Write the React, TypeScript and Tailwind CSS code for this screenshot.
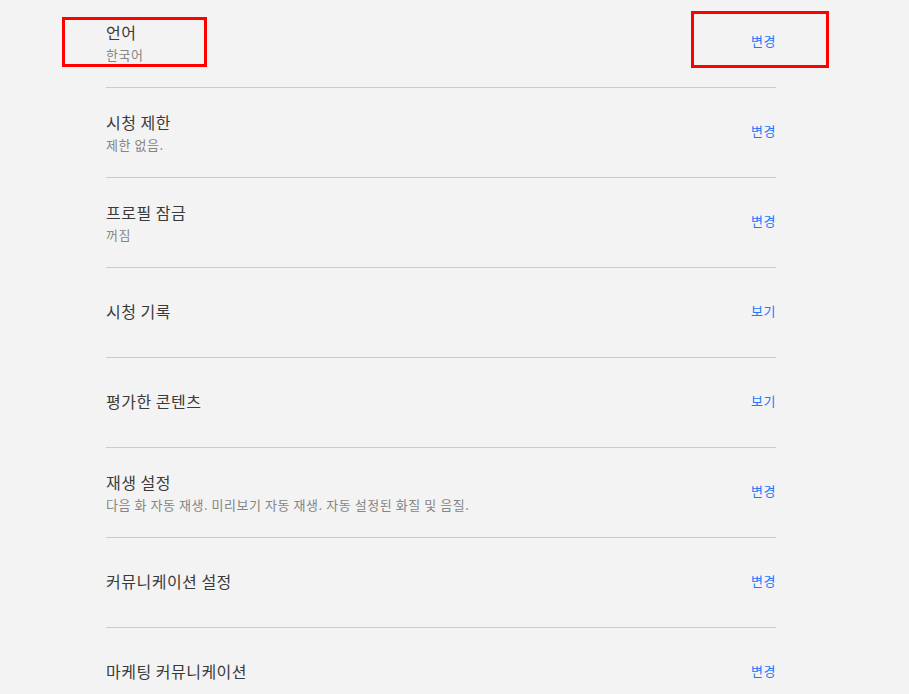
import React from "react";

const rows: { title: string; sub?: string; action: string }[] = [
  { title: "언어", sub: "한국어", action: "변경" },
  { title: "시청 제한", sub: "제한 없음.", action: "변경" },
  { title: "프로필 잠금", sub: "꺼짐", action: "변경" },
  { title: "시청 기록", action: "보기" },
  { title: "평가한 콘텐츠", action: "보기" },
  { title: "재생 설정", sub: "다음 화 자동 재생. 미리보기 자동 재생. 자동 설정된 화질 및 음질.", action: "변경" },
  { title: "커뮤니케이션 설정", action: "변경" },
  { title: "마케팅 커뮤니케이션", action: "변경" },
];

export default function App() {
  return (
    <div
      className="relative w-[909px] h-[694px] overflow-hidden bg-[#f3f3f3]"
      style={{ fontFamily: '"Noto Sans CJK KR", "Noto Sans", sans-serif' }}
    >
      <div className="ml-[106px] w-[670px] -mt-[2px]">
        {rows.map((r, i) => (
          <div key={i} className="flex h-[90px] items-center justify-between border-b border-[#cccccc]">
            {r.sub ? (
              <div className="flex flex-col">
                <div className="text-[16px] leading-[22px] tracking-[0.5px] text-[#3a3a3a]">{r.title}</div>
                <div className="mt-[1px] text-[13px] leading-[21px] tracking-[0.55px] text-[#858585]">{r.sub}</div>
              </div>
            ) : (
              <div className="pb-[4px] text-[16px] leading-[22px] tracking-[0.5px] text-[#3a3a3a]">{r.title}</div>
            )}
            <div className="pb-[4px] text-[13px] leading-[20px] tracking-[0.5px] text-[#2176ff]">{r.action}</div>
          </div>
        ))}
      </div>
      <div className="absolute left-[62px] top-[17px] w-[145px] h-[50px] border-[3px] border-[#ff0000]" />
      <div className="absolute left-[691px] top-[11px] w-[138px] h-[57px] border-[3px] border-[#ff0000]" />
    </div>
  );
}
